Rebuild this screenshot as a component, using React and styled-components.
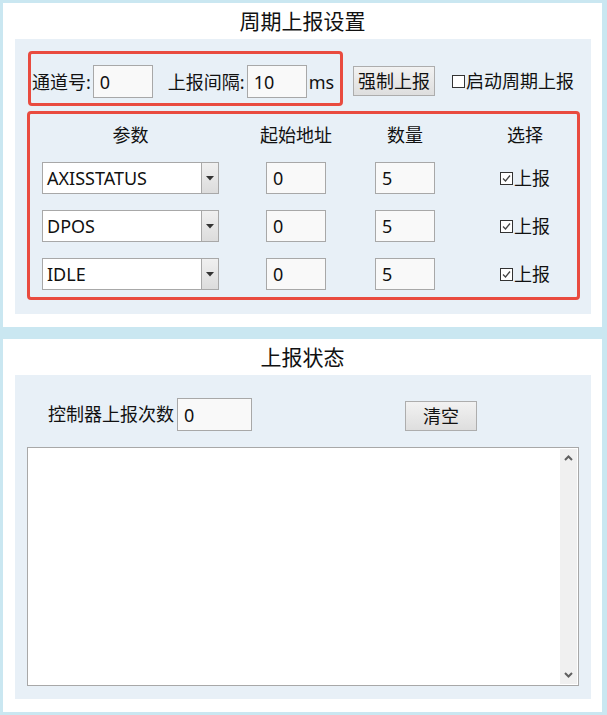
import React, { useState } from 'react';
import styled, { createGlobalStyle } from 'styled-components';

const GlobalStyle = createGlobalStyle`
  html, body { margin: 0; padding: 0; }
  body {
    background: #cae7f1;
    font-family: "Noto Sans", "Noto Sans CJK SC", sans-serif;
    color: #111;
  }
`;

const Page = styled.div`
  width: 607px;
  box-sizing: border-box;
  padding: 3px 5px 4px 3px;
  display: flex;
  flex-direction: column;
  gap: 12px;
`;

const Panel = styled.div`
  background: #fff;
  display: flex;
  flex-direction: column;
`;

const PanelTitle = styled.div`
  height: 36px;
  display: flex;
  align-items: center;
  justify-content: center;
  font-size: 21px;
  line-height: 1;
`;

const Inner = styled.div`
  background: #e8f0f7;
  margin: 0 11px 13px 12px;
  padding: ${p => p.$pad};
  display: flex;
  flex-direction: column;
`;

const TopRow = styled.div`
  display: flex;
  align-items: flex-start;
  padding-left: 1px;
  margin-bottom: 5px;
`;

const RedBox = styled.div`
  border: 3px solid #e94b3f;
  border-radius: 4px;
  box-sizing: border-box;
`;

const ChannelBox = styled(RedBox)`
  width: 315px;
  height: 55px;
  display: flex;
  align-items: center;
  padding: 8px 0 2px 1px;
`;

const Label = styled.span`
  font-size: 18px;
  line-height: 22px;
  white-space: nowrap;
  margin-left: ${p => p.$ml || 0}px;
`;

const TextBox = styled.div`
  box-sizing: border-box;
  width: ${p => p.$w || 60}px;
  height: ${p => p.$h || 32}px;
  margin-left: ${p => p.$ml || 0}px;
  border: 1px solid #a8a8a8;
  background: #f9f9f9;
  display: flex;
  align-items: center;
  padding-left: 6px;
  font-size: 18px;
`;

const Button = styled.button`
  box-sizing: border-box;
  width: ${p => p.$w}px;
  height: 30px;
  margin-left: ${p => p.$ml}px;
  margin-top: ${p => p.$mt}px;
  border: 1px solid #adadad;
  background: linear-gradient(#f2f2f2, #dedede);
  font-family: inherit;
  font-size: 18px;
  line-height: 1;
  padding: 0;
  color: #111;
`;

const CheckLabel = styled.label`
  display: flex;
  align-items: center;
  font-size: 18px;
  line-height: 22px;
  margin-left: ${p => p.$ml || 0}px;
  margin-top: ${p => p.$mt || 0}px;
  svg { margin-right: 1px; }
`;

const TableBox = styled(RedBox)`
  width: 553px;
  padding: 10px 0 7px 12px;
  display: flex;
  flex-direction: column;
  gap: 16px;
`;

const GridRow = styled.div`
  display: grid;
  grid-template-columns: 177px 154px 64px 1fr;
  height: ${p => p.$h}px;
  align-items: center;
`;

const Cell = styled.div`
  display: flex;
  justify-content: ${p => (p.$left ? 'flex-start' : 'center')};
  padding-left: ${p => p.$pl || 0}px;
  font-size: 18px;
  line-height: 22px;
`;

const Combo = styled.div`
  box-sizing: border-box;
  width: 177px;
  height: 32px;
  border: 1px solid #a8a8a8;
  background: #fff;
  display: flex;
`;

const ComboText = styled.div`
  flex: 1;
  display: flex;
  align-items: center;
  padding-left: 4px;
  font-size: 18px;
`;

const ComboArrow = styled.div`
  width: 16px;
  border-left: 1px solid #a8a8a8;
  background: linear-gradient(#f0f0f0, #dcdcdc);
  display: flex;
  align-items: center;
  justify-content: center;
`;

const CounterRow = styled.div`
  display: flex;
  align-items: flex-start;
  padding-left: 21px;
  margin-bottom: 16px;
  height: 33px;
`;

const CounterLabel = styled(Label)`
  line-height: 33px;
`;

const LogBox = styled.div`
  box-sizing: border-box;
  height: 239px;
  border: 1px solid #a8a8a8;
  background: #fff;
  display: flex;
  justify-content: flex-end;
`;

const ScrollBar = styled.div`
  width: 17px;
  margin: 1px;
  background: #f0f0f0;
  display: flex;
  flex-direction: column;
  justify-content: space-between;
  align-items: center;
  padding: 6px 0 6px;
`;

const Box = ({ checked }) => (
  <svg width="13" height="13" viewBox="0 0 13 13">
    <rect x="0.5" y="0.5" width="12" height="12" fill="#fff" stroke="#333" />
    {checked && <path d="M3 6.5 L5.5 9 L10 3.5" fill="none" stroke="#444" strokeWidth="1.3" />}
  </svg>
);

const Caret = () => (
  <svg width="8" height="5" viewBox="0 0 8 5">
    <path d="M0 0 H8 L4 4.5 Z" fill="#333" />
  </svg>
);

const Chevron = ({ up }) => (
  <svg width="9" height="6" viewBox="0 0 9 6">
    <path d={up ? 'M1 5 L4.5 1.5 L8 5' : 'M1 1 L4.5 4.5 L8 1'} fill="none" stroke="#606060" strokeWidth="2" />
  </svg>
);

const params = ['AXISSTATUS', 'DPOS', 'IDLE'];

const App = () => {
  const [rows] = useState(params.map(name => ({ name, addr: 0, num: 5, on: true })));

  return (
    <Page>
      <GlobalStyle />
      <Panel>
        <PanelTitle>周期上报设置</PanelTitle>
        <Inner $pad="12px 11px 14px 12px">
          <TopRow>
            <ChannelBox>
              <Label>通道号:</Label>
              <TextBox $ml={2} $h={33}>0</TextBox>
              <Label $ml={15}>上报间隔:</Label>
              <TextBox $ml={2} $h={33}>10</TextBox>
              <Label $ml={2}>ms</Label>
            </ChannelBox>
            <Button $w={82} $ml={10} $mt={15}>强制上报</Button>
            <CheckLabel $ml={17} $mt={19}><Box />启动周期上报</CheckLabel>
          </TopRow>
          <TableBox>
            <GridRow $h={22}>
              <Cell>参数</Cell>
              <Cell>起始地址</Cell>
              <Cell>数量</Cell>
              <Cell $pl={36}>选择</Cell>
            </GridRow>
            {rows.map((r, i) => (
              <GridRow $h={32} key={i}>
                <Cell $left>
                  <Combo>
                    <ComboText>{r.name}</ComboText>
                    <ComboArrow><Caret /></ComboArrow>
                  </Combo>
                </Cell>
                <Cell><TextBox>{r.addr}</TextBox></Cell>
                <Cell><TextBox>{r.num}</TextBox></Cell>
                <Cell $pl={36}><CheckLabel><Box checked={r.on} />上报</CheckLabel></Cell>
              </GridRow>
            ))}
          </TableBox>
        </Inner>
      </Panel>
      <Panel>
        <PanelTitle>上报状态</PanelTitle>
        <Inner $pad="23px 12px 13px 12px">
          <CounterRow>
            <CounterLabel>控制器上报次数</CounterLabel>
            <TextBox $ml={3} $w={75} $h={33}>0</TextBox>
            <Button $w={72} $ml={153} $mt={3}>清空</Button>
          </CounterRow>
          <LogBox>
            <ScrollBar>
              <Chevron up />
              <Chevron />
            </ScrollBar>
          </LogBox>
        </Inner>
      </Panel>
    </Page>
  );
};

export default App;
